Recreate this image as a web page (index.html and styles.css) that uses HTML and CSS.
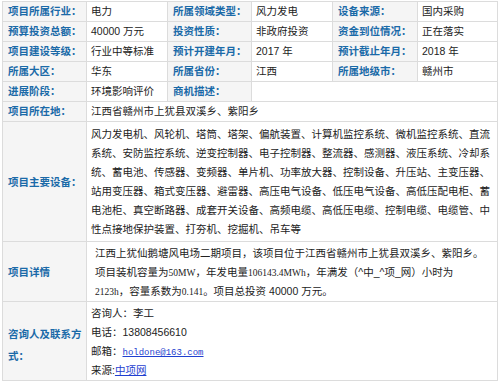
FILE: index.html
```html
<!DOCTYPE html>
<html lang="zh-CN">
<head>
<meta charset="utf-8">
<title>项目信息</title>
<link rel="stylesheet" href="styles.css">
</head>
<body>
<table class="info">
  <colgroup>
    <col class="c1"><col class="c2"><col class="c3"><col class="c4"><col class="c5"><col class="c6">
  </colgroup>
  <tr class="short">
    <td class="lbl">项目所属行业：</td><td class="val">电力</td>
    <td class="lbl">所属领域类型：</td><td class="val">风力发电</td>
    <td class="lbl">设备来源：</td><td class="val">国内采购</td>
  </tr>
  <tr class="short">
    <td class="lbl">预算投资总额：</td><td class="val">40000 万元</td>
    <td class="lbl">投资性质：</td><td class="val">非政府投资</td>
    <td class="lbl">资金到位情况：</td><td class="val">正在落实</td>
  </tr>
  <tr class="short">
    <td class="lbl">项目建设等级：</td><td class="val">行业中等标准</td>
    <td class="lbl">预计开建年月：</td><td class="val">2017 年</td>
    <td class="lbl">预计截止年月：</td><td class="val">2018 年</td>
  </tr>
  <tr class="short">
    <td class="lbl">所属大区：</td><td class="val">华东</td>
    <td class="lbl">所属省份：</td><td class="val">江西</td>
    <td class="lbl">所属地级市：</td><td class="val">赣州市</td>
  </tr>
  <tr class="short">
    <td class="lbl">进展阶段：</td><td class="val">环境影响评价</td>
    <td class="lbl">商机描述：</td><td class="val" colspan="3"></td>
  </tr>
  <tr class="short">
    <td class="lbl">项目所在地：</td><td class="val" colspan="5">江西省赣州市上犹县双溪乡、紫阳乡</td>
  </tr>
  <tr>
    <td class="lbl">项目主要设备：</td>
    <td class="val multi" colspan="5">风力发电机、风轮机、塔筒、塔架、偏航装置、计算机监控系统、微机监控系统、直流系统、安防监控系统、逆变控制器、电子控制器、整流器、感测器、液压系统、冷却系统、蓄电池、传感器、变频器、单片机、功率放大器、控制设备、升压站、主变压器、站用变压器、箱式变压器、避雷器、高压电气设备、低压电气设备、高低压配电柜、蓄电池柜、真空断路器、成套开关设备、高频电缆、高低压电缆、控制电缆、电缆管、中性点接地保护装置、打夯机、挖掘机、吊车等</td>
  </tr>
  <tr>
    <td class="lbl">项目详情</td>
    <td class="val detail" colspan="5">江西上犹仙鹅塘风电场二期项目，该项目位于江西省赣州市上犹县双溪乡、紫阳乡。<br>项目装机容量为<span class="num">50MW</span>，年发电量<span class="num">106143.4MWh</span>，年满发（^中_^项_网）小时为<br><span class="num">2123h</span>，容量系数为<span class="num">0.141</span>。项目总投资 40000 万元。</td>
  </tr>
  <tr>
    <td class="lbl contact-lbl">咨询人及联系方式：</td>
    <td class="val contact" colspan="5">
      <div class="cline">咨询人：李工</div>
      <div class="cline">电话：13808456610</div>
      <div class="cline">邮箱：<a class="mail" href="#">holdone@163.com</a></div>
      <div class="cline">来源:<a class="src" href="#">中项网</a></div>
    </td>
  </tr>
</table>
</body>
</html>
```

FILE: styles.css
```css
html, body {
  margin: 0;
  padding: 0;
  background: #ffffff;
}

body {
  font-family: "Liberation Sans", "Noto Sans CJK SC", sans-serif;
  font-size: 10.5px;
  color: #222222;
}

.info {
  margin: 1px 0 0 2px;
  width: 495px;
  table-layout: fixed;
  border-collapse: collapse;
  border: 1px solid #dcdcdc;
}

.c1 { width: 84px; }
.c2 { width: 81px; }
.c3 { width: 84px; }
.c4 { width: 81px; }
.c5 { width: 85px; }
.c6 { width: 80px; }

.info td {
  border: 1px solid #dcdcdc;
  font-size: 10.5px;
  vertical-align: middle;
  white-space: normal;
}

.short td {
  height: 19px;
  padding: 0;
  line-height: 19px;
}

.lbl {
  background: #f5f5f5;
  color: #1a6aa8;
  font-weight: bold;
}

.info td.lbl {
  padding-left: 5px;
}

.val {
  background: #ffffff;
  color: #222222;
}

.info td.val {
  padding-left: 4px;
  padding-right: 3px;
}

.info td.multi {
  line-height: 19px;
  padding-top: 3px;
  padding-bottom: 2px;
  padding-right: 4px;
}

.info td.detail {
  line-height: 19px;
  padding-top: 2px;
  padding-bottom: 0;
  padding-left: 8px;
}

.num {
  font-family: "Liberation Serif", serif;
  font-size: 9.5px;
  line-height: 1;
}

.info td.contact-lbl {
  line-height: 22px;
  padding-top: 8px;
  padding-bottom: 0;
}

.info td.contact {
  padding-top: 2px;
  padding-bottom: 0;
  vertical-align: top;
}

.cline {
  height: 19px;
  line-height: 19px;
  overflow: hidden;
  white-space: nowrap;
}

.mail {
  color: #1f3fd0;
  font-family: "Liberation Mono", monospace;
  font-size: 9px;
  line-height: 1;
  text-decoration: underline;
}

.src {
  color: #1f3fd0;
  text-decoration: underline;
}
```
